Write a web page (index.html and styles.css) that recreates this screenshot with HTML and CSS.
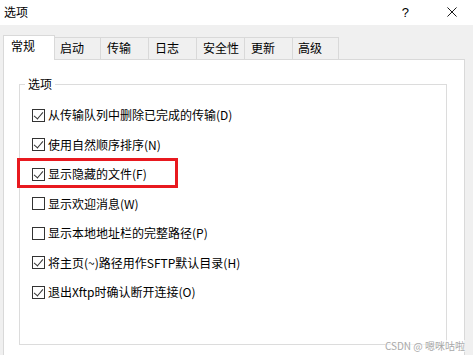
FILE: index.html
```html
<!DOCTYPE html>
<html lang="zh-CN">
<head>
<meta charset="utf-8">
<title>选项</title>
<link rel="stylesheet" href="styles.css">
</head>
<body>
<div class="window">
  <div class="titlebar">
    <span class="title">选项</span>
    <div class="title-buttons">
      <span class="help">?</span>
      <svg class="close" width="11" height="11" viewBox="0 0 11 11"><path d="M0.5 0.5 L10.5 10.5 M10.5 0.5 L0.5 10.5" stroke="#000" stroke-width="1" fill="none"/></svg>
    </div>
  </div>
  <div class="body">
    <div class="tabs">
      <div class="tab active w52">常规</div>
      <div class="tab w46 first">启动</div>
      <div class="tab w48">传输</div>
      <div class="tab w48">日志</div>
      <div class="tab w48">安全性</div>
      <div class="tab w48">更新</div>
      <div class="tab w46">高级</div>
    </div>
    <div class="panel">
      <fieldset class="group">
        <legend>选项</legend>
        <div class="rows">
          <div class="row"><span class="cb checked"></span><span>从传输队列中删除已完成的传输(D)</span></div>
          <div class="row"><span class="cb checked"></span><span>使用自然顺序排序(N)</span></div>
          <div class="row highlight"><span class="cb checked"></span><span>显示隐藏的文件(F)</span></div>
          <div class="row"><span class="cb"></span><span>显示欢迎消息(W)</span></div>
          <div class="row"><span class="cb"></span><span>显示本地地址栏的完整路径(P)</span></div>
          <div class="row"><span class="cb checked"></span><span>将主页(~)路径用作SFTP默认目录(H)</span></div>
          <div class="row"><span class="cb checked"></span><span>退出Xftp时确认断开连接(O)</span></div>
        </div>
      </fieldset>
    </div>
  </div>
  <div class="watermark">CSDN @ 嗯咪咕啦</div>
</div>
</body>
</html>
```
FILE: styles.css
```css
html, body {
  margin: 0;
  padding: 0;
  background: #ffffff;
}
body {
  font-family: "Noto Sans CJK SC", "Noto Sans", sans-serif;
  font-size: 12px;
  color: #000;
  width: 473px;
  height: 355px;
  overflow: hidden;
}
.window {
  position: relative;
  width: 473px;
  height: 355px;
  display: flex;
  flex-direction: column;
}
.titlebar {
  height: 25px;
  background: #fff;
  display: flex;
  align-items: center;
  justify-content: space-between;
  padding: 0 0 0 4px;
  box-sizing: border-box;
}
.title {
  line-height: 16px;
  margin-top: -1px;
}
.title-buttons {
  display: flex;
  align-items: center;
  height: 25px;
}
.help {
  font-family: "Liberation Sans", sans-serif;
  font-size: 13px;
  line-height: 16px;
  margin-right: 38px;
}
.close {
  display: block;
  width: 10px;
  height: 10px;
  margin-right: 16px;
  margin-top: -1px;
}
.body {
  flex: 1;
  background: #f0f0f0;
  padding: 10px 8px 0 3px;
  display: flex;
  flex-direction: column;
}
.tabs {
  display: flex;
  align-items: flex-end;
  height: 24px;
  position: relative;
  z-index: 2;
}
.tab {
  box-sizing: border-box;
  height: 22px;
  border-top: 1px solid #d9d9d9;
  border-right: 1px solid #d9d9d9;
  background: #f0f0f0;
  padding-left: 5px;
  line-height: 20px;
  white-space: nowrap;
}
.tab.active {
  height: 25px;
  margin-bottom: -1px;
  background: #fff;
  border-left: 1px solid #d9d9d9;
  padding-left: 7px;
  line-height: 20px;
}
.w52 { width: 52px; }
.w46 { width: 46px; }
.w48 { width: 48px; padding-left: 6px; }
.panel {
  flex: 1;
  background: #fff;
  border: 1px solid #d9d9d9;
  border-bottom: none;
  padding: 16px 17px 0 15px;
  display: flex;
  flex-direction: column;
}
.group {
  margin: 0;
  border: 1px solid #dcdcdc;
  padding: 15px 12px 0 12px;
  height: 269px;
  box-sizing: border-box;
}
.group legend {
  margin-left: -7px;
  padding: 0 3px;
  line-height: 16px;
}
.rows {
  display: flex;
  flex-direction: column;
  gap: 13.5px;
}
.row {
  position: relative;
  display: flex;
  align-items: center;
  height: 16px;
  line-height: 16px;
  white-space: nowrap;
}
.cb {
  box-sizing: border-box;
  width: 13px;
  height: 13px;
  border: 1px solid #333;
  background: #fff;
  margin-right: 3px;
  position: relative;
  flex: none;
}
.cb.checked::after {
  content: "";
  position: absolute;
  left: 3px;
  top: 0px;
  width: 4px;
  height: 8px;
  border-right: 1px solid #333;
  border-bottom: 1px solid #333;
  transform: rotate(40deg);
}
.highlight::after {
  content: "";
  position: absolute;
  left: -15px;
  top: -8px;
  width: 161px;
  height: 30px;
  border: 3px solid #e8191f;
  box-sizing: border-box;
}
.watermark {
  position: absolute;
  right: 8px;
  bottom: 3px;
  font-size: 10px;
  line-height: 12px;
  color: #a9a9a9;
  background: rgba(255,255,255,0.6);
}
```
